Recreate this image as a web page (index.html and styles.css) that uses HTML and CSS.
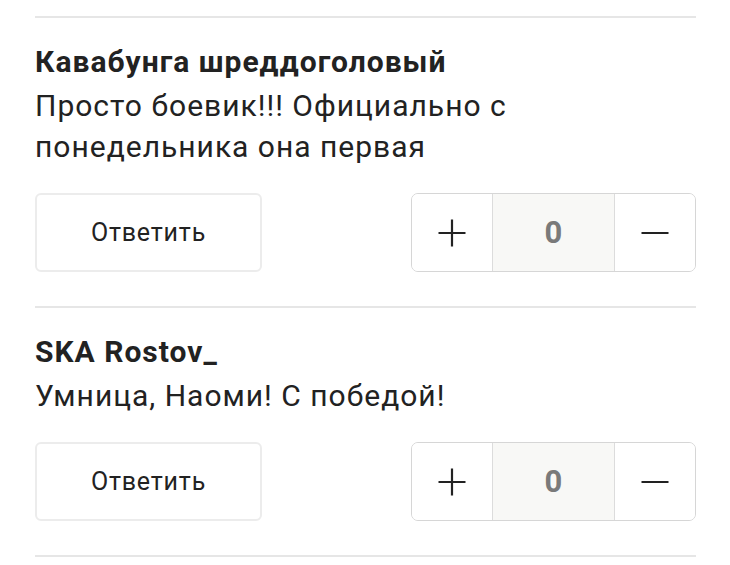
FILE: index.html
```html
<!DOCTYPE html>
<html lang="ru">
<head>
<meta charset="utf-8">
<link rel="stylesheet" href="styles.css">
</head>
<body>
<div class="list">
  <div class="comment">
    <div class="author">Кавабунга шреддоголовый</div>
    <div class="text">Просто боевик!!! Официально с<br>понедельника она первая</div>
    <div class="actions">
      <button class="reply">Ответить</button>
      <div class="vote">
        <div class="vbtn"><svg width="28" height="28" viewBox="0 0 28 28"><path d="M14 0.5V27.5M0.5 14H27.5" stroke="#222" stroke-width="2.2" fill="none"/></svg></div>
        <div class="count">0</div>
        <div class="vbtn"><svg width="28" height="28" viewBox="0 0 28 28"><path d="M0.5 14H27.5" stroke="#222" stroke-width="2.2" fill="none"/></svg></div>
      </div>
    </div>
  </div>
  <div class="comment">
    <div class="author">SKA Rostov_</div>
    <div class="text">Умница, Наоми! С победой!</div>
    <div class="actions">
      <button class="reply">Ответить</button>
      <div class="vote">
        <div class="vbtn"><svg width="28" height="28" viewBox="0 0 28 28"><path d="M14 0.5V27.5M0.5 14H27.5" stroke="#222" stroke-width="2.2" fill="none"/></svg></div>
        <div class="count">0</div>
        <div class="vbtn"><svg width="28" height="28" viewBox="0 0 28 28"><path d="M0.5 14H27.5" stroke="#222" stroke-width="2.2" fill="none"/></svg></div>
      </div>
    </div>
  </div>
  <div class="sep"></div>
</div>
</body>
</html>
```

FILE: styles.css
```css
html, body {
  margin: 0;
  padding: 0;
  background: #fff;
}
body {
  font-family: Roboto, "Noto Sans", sans-serif;
  color: #222;
}
.list {
  padding: 16px 34px 0 35px;
}
.comment {
  border-top: 2px solid #e6e6e6;
  padding: 23px 0 34px;
}
.sep {
  border-top: 2px solid #e6e6e6;
}
.author {
  font-size: 30px;
  line-height: 41px;
  letter-spacing: 1px;
  font-weight: 700;
  color: #222;
}
.text {
  margin-top: 3px;
  font-size: 30px;
  line-height: 41px;
  letter-spacing: 1px;
  color: #222;
}
.actions {
  margin-top: 26px;
  display: flex;
  justify-content: space-between;
  align-items: center;
}
.reply {
  width: 227px;
  height: 79px;
  box-sizing: border-box;
  border: 2px solid #ececec;
  border-radius: 6px;
  background: #fff;
  font-family: Roboto, "Noto Sans", sans-serif;
  font-size: 25px;
  letter-spacing: 0.8px;
  color: #222;
  padding: 0;
}
.vote {
  width: 285px;
  height: 79px;
  box-sizing: border-box;
  border: 1px solid #d6d6d6;
  border-radius: 7px;
  display: flex;
  overflow: hidden;
}
.vbtn {
  width: 80px;
  display: flex;
  align-items: center;
  justify-content: center;
  background: #fff;
}
.count {
  flex: 1;
  display: flex;
  align-items: center;
  justify-content: center;
  background: #f8f8f6;
  border-left: 1px solid #dcdcdc;
  border-right: 1px solid #dcdcdc;
  font-size: 31px;
  font-weight: 700;
  color: #7a7a7a;
}
```
